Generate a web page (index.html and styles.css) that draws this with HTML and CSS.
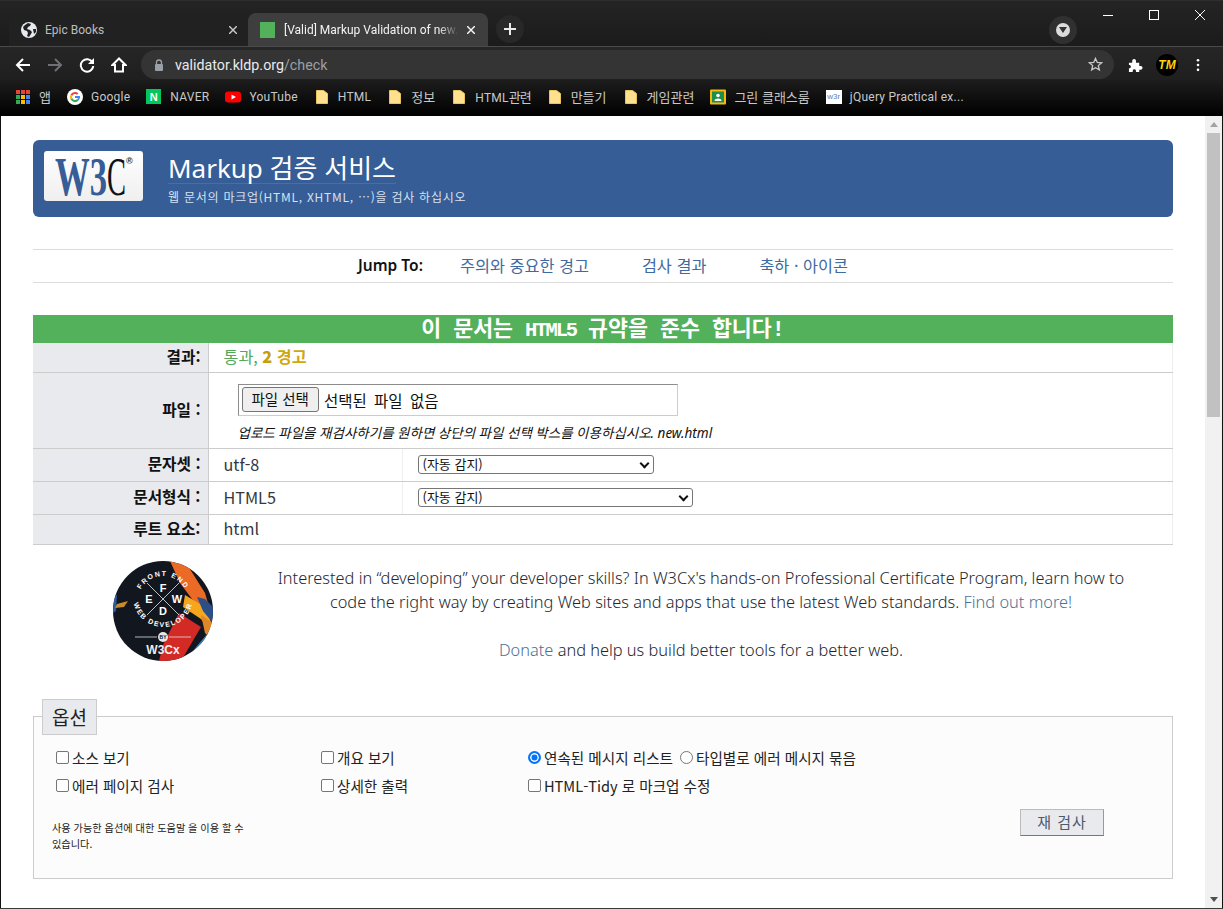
FILE: index.html
```html
<!DOCTYPE html>
<html lang="ko">
<head>
<meta charset="utf-8">
<title>Markup 검증 서비스</title>
<link rel="stylesheet" href="styles.css">
</head>
<body>
<div class="window">
  <div class="tabstrip">
    <div class="tab">
      <svg class="tab-icon" viewBox="0 0 16 16"><circle cx="8" cy="8" r="8" fill="#e8eaed"/><path d="M7 1 4 3 2 5l1 3 3 1 1 2-1 3 2 1 2-3 1-2-2-2-3-1 1-2 2-1 1-2z" fill="#202124"/><path d="M12 7l3 0 0 3-2 2z" fill="#202124"/></svg>
      <span class="tab-title">Epic Books</span>
      <svg class="tab-x" viewBox="0 0 8 8"><path d="M0 0l8 8M8 0 0 8" stroke="#c4c7c5" stroke-width="1.500"/></svg>
    </div>
    <div class="tab active">
      <span class="favicon-green"></span>
      <span class="tab-title fade">[Valid] Markup Validation of new.html</span>
      <svg class="tab-x" viewBox="0 0 8 8"><path d="M0 0l8 8M8 0 0 8" stroke="#f1f3f4" stroke-width="1.500"/></svg>
    </div>
    <div class="newtab"><svg viewBox="0 0 12 12" width="12" height="12"><path d="M6 0v12M0 6h12" stroke="#e8eaed" stroke-width="2"/></svg></div>
    <div class="spacer"></div>
    <div class="profile-btn"><span class="profile-dot"><svg viewBox="0 0 8 6" width="8" height="6"><path d="M0 0h8L4 6z" fill="#333"/></svg></span></div>
    <div class="winbtns">
      <svg viewBox="0 0 10 10" width="10" height="10"><path d="M0 5.500h10" stroke="#fff"/></svg>
      <svg viewBox="0 0 10 10" width="10" height="10"><rect x=".5" y=".5" width="9" height="9" fill="none" stroke="#fff"/></svg>
      <svg viewBox="0 0 10 10" width="10" height="10"><path d="M0 0l10 10M10 0 0 10" stroke="#fff"/></svg>
    </div>
  </div>
  <div class="toolbar">
    <svg class="nav" viewBox="0 0 16 16"><path d="M15 8H2M8 2 2 8l6 6" fill="none" stroke="#fff" stroke-width="2"/></svg>
    <svg class="nav" viewBox="0 0 16 16"><path d="M1 8h13M8 2l6 6-6 6" fill="none" stroke="#6f7073" stroke-width="2"/></svg>
    <svg class="nav" viewBox="0 0 16 16"><path d="M13.500 5.500A6.200 6.200 0 1 0 14.200 9" fill="none" stroke="#fff" stroke-width="2"/><path d="M15 1v6H9z" fill="#fff"/></svg>
    <svg class="nav" viewBox="0 0 16 16"><path d="M8 1.500 1.500 8H4v6.500h8V8h2.500z" fill="none" stroke="#fff" stroke-width="2"/></svg>
    <div class="omnibox">
      <svg class="lock" viewBox="0 0 10 12"><path d="M2.500 5V3.500a2.500 2.500 0 0 1 5 0V5" fill="none" stroke="#9aa0a6" stroke-width="1.300"/><rect x="1" y="5" width="8" height="7" rx="1" fill="#9aa0a6"/></svg>
      <span class="url"><span class="host">validator.kldp.org</span>/check</span>
      <svg class="star" viewBox="0 0 16 16"><path d="M8 1.500l1.900 4.300 4.600.4-3.500 3 1.100 4.600L8 11.400l-4.100 2.400L5 9.200l-3.500-3 4.600-.4z" fill="none" stroke="#c8c9cb" stroke-width="1.400"/></svg>
    </div>
    <svg class="ext" viewBox="0 0 16 16"><path d="M1 5h3.500V3a2 2 0 0 1 4 0v2H12v3.500h1.500a2 2 0 0 1 0 4H12V15H8.500v-1.500a1.800 1.800 0 0 0-3.500 0V15H1v-4h1a2 2 0 0 0 0-3.500H1z" fill="#fff"/></svg>
    <span class="tm">TM</span>
    <svg class="menu" viewBox="0 0 4 16"><circle cx="2" cy="2.500" r="1.500" fill="#fff"/><circle cx="2" cy="8" r="1.500" fill="#fff"/><circle cx="2" cy="13.500" r="1.500" fill="#fff"/></svg>
  </div>
  <div class="bookmarks">
    <a class="bm"><svg class="bi" viewBox="0 0 14 14"><rect x="0" y="0" width="4" height="4" fill="#e84435"/><rect x="5" y="0" width="4" height="4" fill="#e84435"/><rect x="10" y="0" width="4" height="4" fill="#e84435"/><rect x="0" y="5" width="4" height="4" fill="#34a853"/><rect x="5" y="5" width="4" height="4" fill="#fbbc05"/><rect x="10" y="5" width="4" height="4" fill="#4285f4"/><rect x="0" y="10" width="4" height="4" fill="#34a853"/><rect x="5" y="10" width="4" height="4" fill="#fbbc05"/><rect x="10" y="10" width="4" height="4" fill="#4285f4"/></svg><span class="ko">앱</span></a>
    <a class="bm"><svg class="bi16" viewBox="0 0 16 16"><circle cx="8" cy="8" r="8" fill="#fff"/><path d="M8 3a5 5 0 0 1 3.400 1.300L10 5.700A3 3 0 0 0 5.200 7L3.500 5.700A5 5 0 0 1 8 3z" fill="#ea4335"/><path d="M3.500 5.700 5.200 7a3 3 0 0 0 0 2L3.500 10.300a5 5 0 0 1 0-4.600z" fill="#fbbc05"/><path d="M3.500 10.300 5.200 9A3 3 0 0 0 10 10.300l1.600 1.300A5 5 0 0 1 3.500 10.300z" fill="#34a853"/><path d="M8 7h5a5 5 0 0 1-1.400 4.600L10 10.300A2 2 0 0 0 11 9H8z" fill="#4285f4"/></svg><span>Google</span></a>
    <a class="bm"><span class="naver">N</span><span>NAVER</span></a>
    <a class="bm"><svg class="bi16" viewBox="0 0 16 16"><rect x="0" y="2.500" width="16" height="11" rx="3" fill="#f00"/><path d="M6.500 5.500v5L11 8z" fill="#fff"/></svg><span>YouTube</span></a>
    <a class="bm"><svg class="fi" viewBox="0 0 12 14"><path d="M.5.500h7l4 3v10H.5z" fill="#fee18f" stroke="#e8c45f"/></svg><span>HTML</span></a>
    <a class="bm"><svg class="fi" viewBox="0 0 12 14"><path d="M.5.500h7l4 3v10H.5z" fill="#fee18f" stroke="#e8c45f"/></svg><span class="ko">정보</span></a>
    <a class="bm"><svg class="fi" viewBox="0 0 12 14"><path d="M.5.500h7l4 3v10H.5z" fill="#fee18f" stroke="#e8c45f"/></svg><span>HTML<span class="ko tight">관련</span></span></a>
    <a class="bm"><svg class="fi" viewBox="0 0 12 14"><path d="M.5.500h7l4 3v10H.5z" fill="#fee18f" stroke="#e8c45f"/></svg><span class="ko">만들기</span></a>
    <a class="bm"><svg class="fi" viewBox="0 0 12 14"><path d="M.5.500h7l4 3v10H.5z" fill="#fee18f" stroke="#e8c45f"/></svg><span class="ko">게임관련</span></a>
    <a class="bm"><svg class="bi16" viewBox="0 0 16 16"><rect x="0" y=".5" width="16" height="15" rx="1" fill="#f7b80c"/><rect x="2" y="2.500" width="12" height="11" fill="#1e8e4a"/><circle cx="8" cy="6.500" r="1.800" fill="#fff"/><path d="M4.500 12c0-3.200 7-3.200 7 0z" fill="#fff"/></svg><span class="ko">그린 클래스룸</span></a>
    <a class="bm"><span class="w3r">w3r</span><span>jQuery Practical ex...</span></a>
  </div>
  <div class="viewport">
    <main class="page">
      <header class="banner">
        <div class="w3c-logo">
          <svg viewBox="0 0 99 50" width="99" height="50">
            <text x="11" y="44" textLength="52" lengthAdjust="spacingAndGlyphs" class="w3c-w">W3</text>
            <text x="63" y="44" textLength="19" lengthAdjust="spacingAndGlyphs" class="w3c-c">C</text>
            <text x="82" y="13" class="w3c-r">®</text>
          </svg>
        </div>
        <div class="banner-text">
          <h1>Markup 검증 서비스</h1>
          <p>웹 문서의 마크업(HTML, XHTML, …)을 검사 하십시오</p>
        </div>
      </header>
      <nav class="jump">
        <strong>Jump To:</strong>
        <a>주의와 중요한 경고</a>
        <a>검사 결과</a>
        <a>축하 · 아이콘</a>
      </nav>
      <h2 class="result-title">이 문서는 <span class="mono">HTML5</span> 규약을 준수 합니다!</h2>
      <table class="results">
        <colgroup><col class="c1"><col class="c2"><col></colgroup>
        <tr class="r-result"><th>결과:</th><td colspan="2"><span class="pass">통과,</span> <strong class="warn"><b>2</b> 경고</strong></td></tr>
        <tr class="r-file"><th>파일 :</th><td colspan="2" class="file-cell">
          <div class="filebox"><span class="filebtn">파일 선택</span><span class="nofile">선택된 파일 없음</span></div>
          <p class="filenote">업로드 파일을 재검사하기를 원하면 상단의 파일 선택 박스를 이용하십시오. new.html</p>
        </td></tr>
        <tr class="r-sel"><th>문자셋 :</th><td>utf-8</td><td><span class="select s1">(자동 감지)</span></td></tr>
        <tr class="r-sel"><th>문서형식 :</th><td>HTML5</td><td><span class="select s2">(자동 감지)</span></td></tr>
        <tr class="r-root"><th>루트 요소:</th><td colspan="2">html</td></tr>
      </table>
      <section class="promo">
        <div class="badge">
          <svg viewBox="0 0 100 100" width="100" height="100">
            <defs>
              <clipPath id="cc"><circle cx="50" cy="50" r="50"/></clipPath>
              <path id="arcTop" d="M25 40a25 25 0 0 1 50 0"/>
              <path id="arcBot" d="M20 36a30 30 0 0 0 60 0"/>
            </defs>
            <g clip-path="url(#cc)">
              <rect width="100" height="100" fill="#12171f"/>
              <path d="M57 0 75 5 92 32 100 60 82 42 67 22z" fill="#ea6a26"/>
              <path d="M72 34 92 46 100 66 100 74 88 58 70 46z" fill="#f3a61e"/>
              <path d="M66 52 88 66 68 100 46 100 50 84z" fill="#d42a26"/>
              <path d="M84 36 92 38 100 46 100 62 90 50z" fill="#2c4f88"/>
              <path d="M88 54 100 62 100 80 92 72z" fill="#e0862a"/>
              <path d="M0 34 4 34 3 50 0 52z" fill="#2a5c9e"/>
              <path d="M4 43 15 40 11 46 2 47z" fill="#c88a2a"/>
              <path d="M78 92 100 66 100 69 80 96zM82 95 100 73 100 76 84 98z" fill="#3f7fc4"/>
              <path d="M0 80 8 76 5 100 0 100z" fill="#c22b2b"/>
              <text class="ring"><textPath href="#arcTop" startOffset="50%">FRONT END</textPath></text>
              <text class="ring"><textPath href="#arcBot" startOffset="50%">WEB DEVELOPER</textPath></text>
              <path d="M34 22 66 54M66 22 34 54" stroke="#eee" stroke-width=".8"/>
              <text x="50" y="31" class="fewd">F</text><text x="36" y="42" class="fewd">E</text><text x="64" y="42" class="fewd">W</text><text x="50" y="54" class="fewd">D</text>
              <path d="M22 76H44M56 76H78" stroke="#ddd" stroke-width=".8"/>
              <circle cx="50" cy="76" r="5" fill="#e8e8e8"/>
              <text x="50" y="78" class="by">BY</text>
              <text x="50" y="93" class="w3cx">W3Cx</text>
            </g>
          </svg>
        </div>
        <div class="promo-text">
          <p>Interested in “developing” your developer skills? In W3Cx's hands-on Professional Certificate Program, learn how to code the right way by creating Web sites and apps that use the latest Web standards. <a>Find out more!</a></p>
          <p><a>Donate</a> and help us build better tools for a better web.</p>
        </div>
      </section>
      <fieldset class="options">
        <legend>옵션</legend>
        <div class="opt-grid">
          <label class="opt"><span class="cb"></span>소스 보기</label>
          <label class="opt"><span class="cb"></span>개요 보기</label>
          <div class="opt"><span class="radio on"></span>연속된 메시지 리스트 <span class="radio"></span>타입별로 에러 메시지 묶음</div>
          <label class="opt"><span class="cb"></span>에러 페이지 검사</label>
          <label class="opt"><span class="cb"></span>상세한 출력</label>
          <label class="opt"><span class="cb"></span>HTML-Tidy 로 마크업 수정</label>
        </div>
        <div class="opt-foot">
          <p class="help">사용 가능한 옵션에 대한 도움말 을 이용 할 수 있습니다.</p>
          <span class="recheck">재 검사</span>
        </div>
      </fieldset>
    </main>
    <div class="scrollbar">
      <svg class="sarrow" viewBox="0 0 8 5" width="8" height="5"><path d="M0 5h8L4 0z" fill="#a3a3a3"/></svg>
      <div class="thumb"></div>
      <svg class="sarrow down" viewBox="0 0 8 5" width="8" height="5"><path d="M0 0h8L4 5z" fill="#505050"/></svg>
    </div>
  </div>
  <div class="desktop-sliver"></div>
</div>
</body>
</html>
```
FILE: styles.css
```css
* { box-sizing: border-box; }
html, body { margin: 0; padding: 0; height: 100%; overflow: hidden; }
body { font-family: "Noto Sans CJK KR", "Noto Sans", sans-serif; background: #202124; }
.window { width: 1223px; height: 909px; display: flex; flex-direction: column; background: #111; }
.tabstrip { height: 46px; flex: none; display: flex; align-items: flex-end; padding-left: 9px; background: linear-gradient(#242424, #1b1b1b); position: relative; border-top: 1px solid #2e2e2e; }
.tab { width: 239px; height: 33px; background: #212121; border-radius: 8px 8px 0 0; display: flex; align-items: center; padding: 0 9px 0 12px; color: #bdbdbd; font: 12px "Roboto", "Noto Sans CJK KR", sans-serif; }
.tab.active { background: #3e3e3e; color: #f1f3f4; width: 240px; padding-right: 11px; }
.tab-icon { width: 16px; height: 16px; flex: none; margin-right: 8px; }
.favicon-green { width: 15px; height: 16px; background: #53b05b; flex: none; margin-right: 9px; }
.tab-title { flex: 1; white-space: nowrap; overflow: hidden; min-width: 0; }
.fade { -webkit-mask-image: linear-gradient(90deg, #000 88%, transparent); mask-image: linear-gradient(90deg, #000 88%, transparent); }
.tab-x { width: 8px; height: 8px; margin: 0 2px 0 8px; flex: none; }
.newtab { width: 28px; height: 28px; border-radius: 50%; background: #282828; display: flex; align-items: center; justify-content: center; margin: 0 0 3px 8px; }
.spacer { flex: 1; }
.profile-btn { width: 28px; height: 28px; border-radius: 50%; background: #303030; margin: 0 146px 2px 0; display: flex; align-items: center; justify-content: center; }
.profile-dot { width: 14px; height: 14px; border-radius: 50%; background: #dcdcdc; display: flex; align-items: center; justify-content: center; }
.winbtns { position: absolute; top: 9px; right: 18px; display: flex; gap: 36px; }
.toolbar { height: 34px; flex: none; background: linear-gradient(#262626, #1f1f1f); border-top: 1px solid #494949; display: flex; align-items: flex-start; padding: 10px 0 0 15px; }
.nav { width: 16px; height: 16px; margin-right: 16px; flex: none; }
.nav:nth-child(4) { margin-right: 14px; }
.omnibox { width: 973px; height: 29px; margin-top: -7px; border-radius: 15px; background: #343434; display: flex; align-items: center; padding: 0 10px 0 13px; font: 14.250px "Roboto", sans-serif; color: #9aa0a6; }
.lock { width: 10px; height: 12px; margin-right: 11px; flex: none; }
.url { flex: 1; }
.host { color: #e8eaed; }
.star { width: 15px; height: 15px; margin-right: 1px; }
.ext { width: 15px; height: 15px; margin: 1px 0 0 14px; flex: none; }
.tm { width: 22px; height: 22px; margin: -3px 0 0 13px; border-radius: 50%; background: #000; color: #f5d90c; font: italic bold 12px "Liberation Sans", sans-serif; display: flex; align-items: center; justify-content: center; flex: none; }
.menu { width: 4px; height: 14px; margin: 1px 0 0 18px; flex: none; }
.bookmarks { height: 36px; flex: none; background: linear-gradient(#1d1d1d, #000); display: flex; align-items: center; padding: 0 0 3px 16px; font: 12px "Roboto", "Noto Sans CJK KR", sans-serif; letter-spacing: .25px; color: #c8c8c8; }
.bm { display: flex; align-items: center; margin-right: 16px; }
.ko { font: 13px "Noto Sans CJK KR", sans-serif; letter-spacing: 0; }
.ko.tight { letter-spacing: -1px; }
.bi { width: 14px; height: 14px; margin-right: 9px; flex: none; }
.bi16 { width: 16px; height: 16px; margin-right: 8px; flex: none; }
.naver { width: 15px; height: 15px; background: #03c75a; color: #fff; font: bold 11px "Liberation Sans", sans-serif; display: flex; align-items: center; justify-content: center; margin-right: 9px; }
.fi { width: 12px; height: 14px; margin: 0 10px 0 2px; flex: none; }
.w3r { width: 16px; height: 14px; background: #fff; color: #5a7fb8; font: 8px "Liberation Sans", sans-serif; letter-spacing: 0; display: flex; align-items: center; justify-content: center; margin-right: 8px; }
.viewport { flex: 1; min-height: 0; margin: 0 1px; background: #fff; display: flex; overflow: hidden; }
.page { flex: 1; min-width: 0; padding: 24px 32px 0 32px; color: #1f2328; }
.scrollbar { width: 17px; flex: none; background: #f1f1f1; display: flex; flex-direction: column; align-items: center; }
.sarrow { margin: 6px 0 6px; flex: none; }
.sarrow.down { margin: auto 0 6px; }
.thumb { width: 13px; height: 284px; background: #c1c1c1; flex: none; }
.desktop-sliver { height: 1px; flex: none; background: #3a3a3a; }
.banner { height: 77px; background: #365d95; border-radius: 6px; display: flex; padding: 11px 0 0 11px; color: #fff; }
.w3c-logo { width: 99px; height: 50px; border-radius: 3px; background: linear-gradient(#fff, #efefef); flex: none; }
.w3c-w { font: bold 54px "Liberation Serif", serif; fill: #365d95; }
.w3c-c { font: 54px "Liberation Serif", serif; fill: #111; }
.w3c-r { font: bold 9px "Liberation Sans", sans-serif; fill: #333; }
.banner-text { margin-left: 25px; }
.banner-text h1 { margin: 0; font: 400 26px/32px "Noto Sans", "Noto Sans CJK KR", sans-serif; border-bottom: 1px solid #4a6ea3; height: 33px; width: fit-content; padding-top: 1px; }
.banner-text p { margin: 3px 0 0; font: 12px/20px "Noto Sans CJK KR", sans-serif; color: #d7e1f0; letter-spacing: .75px; }
.jump { margin-top: 32px; height: 34px; border-top: 1px solid #ddd; border-bottom: 1px solid #ddd; display: flex; align-items: center; justify-content: center; gap: 53px; font-size: 16.300px; color: #3f6a9f; padding-bottom: 3px; }
.jump strong { color: #111; font: 600 15.500px "Noto Sans", sans-serif; margin-right: -16px; }
.result-title { margin: 32px 0 0; height: 28px; background: #53b05b; color: #fff; font: 700 21.700px/31px "Liberation Mono", "Noto Sans CJK KR", monospace; text-align: center; word-spacing: -1px; overflow: hidden; }
.mono { font-size: 20.500px; letter-spacing: -2.100px; }
.results { width: 1140px; border-collapse: collapse; table-layout: fixed; font-size: 16.200px; border: 1px solid #ccc; border-top: 0; border-left: 0; }
.c1 { width: 175px; }
.c2 { width: 194px; }
.results th { background: #e9eaee; text-align: right; padding: 0 7px 2px 0; font-weight: 700; color: #111; font-size: 15.700px; border-bottom: 1px solid #ccc; border-right: 1px solid #ccc; }
.results td { padding: 0 0 2px 15px; border-bottom: 1px solid #ccc; border-right: 1px solid #eee; color: #33383d; }
.results td.file-cell { vertical-align: top; padding-top: 11px; }
.r-result { height: 29px; }
.r-file { height: 76px; }
.r-sel { height: 33px; }
.r-root { height: 30px; }
.pass { color: #53a85b; }
.warn { color: #d0a80e; }
.warn b { color: #c59d0e; }
.filebox { width: 440px; height: 32px; margin-left: 14px; border: 1px solid #8d8d8d; border-right-color: #ccc; border-bottom-color: #ccc; display: flex; align-items: center; padding-left: 3px; font-size: 15.500px; color: #111; }
.filebtn { border: 1px solid #767676; border-radius: 3px; background: #efefef; padding: 0 9px; height: 25px; line-height: 22px; font-size: 14.500px; }
.nofile { margin-left: 5px; word-spacing: 3px; }
.filenote { margin: 9px 0 0 14px; font: italic 13.500px/16px "Noto Sans", "Noto Sans CJK KR", sans-serif; color: #111; }
.select { display: block; height: 19px; margin-top: 2px; border: 1px solid #767676; border-radius: 3px; font-size: 13px; line-height: 16px; padding-left: 4px; background: #fff; color: #111; position: relative; }
.select::after { content: ""; position: absolute; right: 5px; top: 4px; width: 5px; height: 5px; border: solid #111; border-width: 0 2px 2px 0; transform: rotate(45deg); }
.s1 { width: 236px; }
.s2 { width: 275px; }
.promo { display: flex; padding: 16px 0 0 80px; height: 148px; }
.badge { width: 100px; height: 100px; flex: none; }
.ring { font: 700 7px "Liberation Sans", sans-serif; fill: #fff; letter-spacing: 1.500px; text-anchor: middle; }
.w3cx { font: 700 12px "Liberation Sans", sans-serif; fill: #eee; text-anchor: middle; }
.fewd { font: 700 11px "Liberation Sans", sans-serif; fill: #fff; text-anchor: middle; }
.by { font: 700 5px "Liberation Sans", sans-serif; fill: #111; text-anchor: middle; }
.promo-text { flex: 1; padding: 5px 0 0 64px; margin-right: 48px; text-align: center; font: 300 16.370px/24px "Noto Sans", "Noto Sans CJK KR", sans-serif; color: #1d2730; }
.promo-text p { margin: 0 0 24px; }
.promo-text a { color: #4a7196; }
.options { margin: 6px 0 0; padding: 0 0 0 22px; border: 1px solid #ccc; background: #fcfcfd; height: 180px; min-width: 0; }
.options legend { padding: 0 9px; margin: 0 0 0 -14px; height: 36px; background: #e9eaee; border: 1px solid #ccc; font-size: 19px; line-height: 34px; color: #222; }
.opt-grid { display: grid; grid-template-columns: 265px 207px 1fr; margin-top: 9px; font-size: 14.600px; color: #222; }
.opt { display: flex; align-items: center; height: 28px; white-space: nowrap; }
.cb { width: 13px; height: 13px; border: 1px solid #767676; border-radius: 2px; background: #fff; margin-right: 3px; flex: none; }
.radio { width: 13px; height: 13px; border: 1px solid #767676; border-radius: 50%; background: #fff; margin: 0 3px 0 7px; flex: none; display: inline-block; }
.radio.on { margin-left: 0; border: 2px solid #0075ff; background: #0075ff; box-shadow: inset 0 0 0 1.500px #fff; }
.opt-foot { display: flex; justify-content: space-between; }
.help { width: 195px; margin: 20px 0 0 -4px; font-size: 10.200px; line-height: 16px; color: #222; }
.recheck { width: 84px; height: 27px; margin: 9px 68px 0 0; background: #e9eaee; border: 1px solid #bbb; border-bottom-color: #777; border-right-color: #999; text-align: center; font-size: 15px; line-height: 24px; color: #4b5a6e; letter-spacing: 1px; }
```
